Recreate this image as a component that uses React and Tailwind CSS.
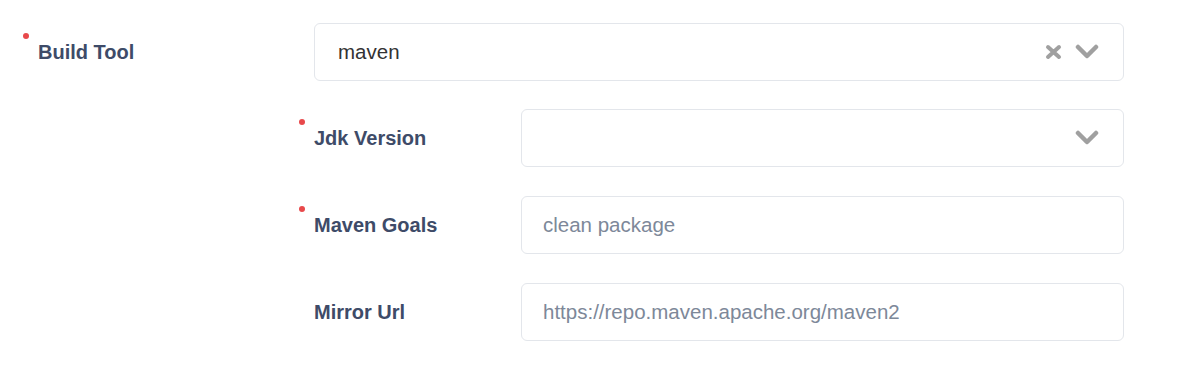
import React from 'react';

const FONT = { fontFamily: '"Liberation Sans", Arial, sans-serif' };

function Label({ text, required, width }) {
  return (
    <div className={`${width} shrink-0 flex items-center`}>
      <span className="relative text-[20px] font-bold text-[#3e4b68] leading-none">
        {required && (
          <span className="absolute -left-[15px] -top-[9px] w-[6px] h-[6px] rounded-full bg-[#e8494b]" />
        )}
        {text}
      </span>
    </div>
  );
}

function Chevron() {
  return (
    <svg width="24" height="16" viewBox="0 0 24 16" className="shrink-0">
      <polyline points="3,3 12,12 21,3" fill="none" stroke="#a0a0a0" strokeWidth="4.5" strokeLinecap="round" strokeLinejoin="round" />
    </svg>
  );
}

function Cross() {
  return (
    <svg width="17" height="16" viewBox="0 0 17 16" className="shrink-0">
      <path d="M3 3 L14 13 M14 3 L3 13" fill="none" stroke="#a0a0a0" strokeWidth="4" strokeLinecap="round" />
    </svg>
  );
}

function SelectBox({ value, clearable }) {
  return (
    <div className="flex-1 h-[58px] flex items-center border border-[#e3e6eb] rounded-[6px] bg-white pl-[23px] pr-[24px]">
      <span className="flex-1 text-[20.5px] text-[#333333]">{value}</span>
      <div className="flex items-center gap-[13px]">
        {clearable && <Cross />}
        <Chevron />
      </div>
    </div>
  );
}

function TextBox({ placeholder }) {
  return (
    <input
      className="flex-1 h-[58px] border border-[#e3e6eb] rounded-[6px] bg-white px-[21px] text-[20.5px] text-[#333333] placeholder:text-[#7d8899] outline-none"
      style={FONT}
      placeholder={placeholder}
    />
  );
}

export default function App() {
  return (
    <div className="w-[1193px] h-[369px] bg-white pl-[38px] pr-[69px] pt-[23px]" style={FONT}>
      <div className="flex">
        <Label text="Build Tool" required width="w-[276px]" />
        <SelectBox value="maven" clearable />
      </div>

      <div className="ml-[276px] mt-[28px] flex flex-col gap-[29px]">
        <div className="flex">
          <Label text="Jdk Version" required width="w-[207px]" />
          <SelectBox value="" />
        </div>
        <div className="flex">
          <Label text="Maven Goals" required width="w-[207px]" />
          <TextBox placeholder="clean package" />
        </div>
        <div className="flex">
          <Label text="Mirror Url" width="w-[207px]" />
          <TextBox placeholder="https://repo.maven.apache.org/maven2" />
        </div>
      </div>
    </div>
  );
}
